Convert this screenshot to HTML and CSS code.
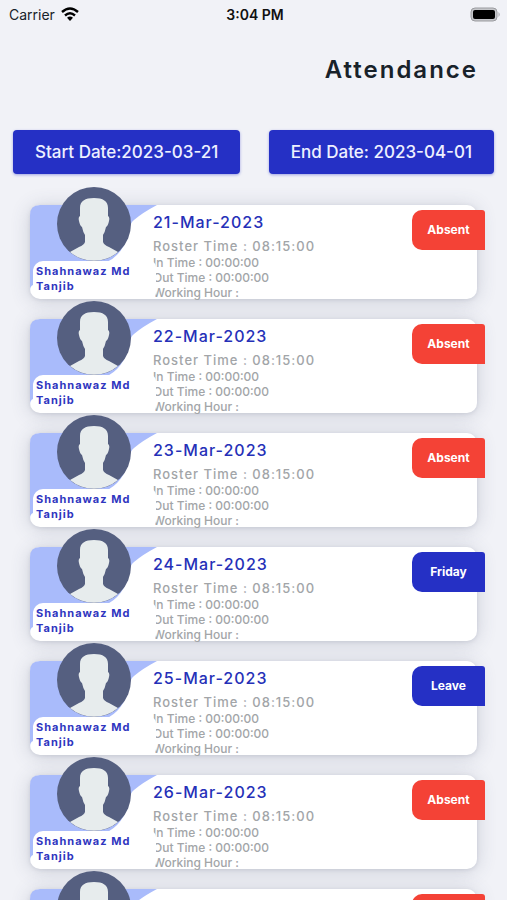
FILE: index.html
```html
<!DOCTYPE html>
<html lang="en">
<head>
<meta charset="utf-8">
<meta name="viewport" content="width=device-width, initial-scale=1">
<title>Attendance</title>
<link rel="stylesheet" href="styles.css">
<script src="attendance.js" defer></script>
</head>
<body>
<header class="status">
  <div class="carrier">Carrier
    <svg class="wifi" viewBox="0 0 18 14" aria-hidden="true"><g fill="none" stroke="#000" stroke-width="2.4"><path d="M1 5Q9-2 17 5"/><path d="M4 8.500Q9 4 14 8.500"/></g><path d="M6 10.800Q9 8.400 12 10.800L9 14Z"/></svg>
  </div>
  <div class="clock">3:04 PM</div>
  <div class="power">
    <svg class="battery" viewBox="0 0 31 15" aria-hidden="true"><rect x="1" y="1" width="26" height="13" rx="4" fill="#c5c6ca" stroke="#9b9ca0"/><rect x="3" y="3" width="22" height="9" rx="2"/><path d="M28.500 5Q31 7.500 28.500 10Z" fill="#a9aaae"/></svg>
  </div>
</header>
<main>
  <h1 class="title">Attendance</h1>
  <div class="filters">
    <button class="date-button" type="button">Start Date:2023-03-21</button>
    <button class="date-button" type="button">End Date: 2023-04-01</button>
  </div>
  <ul class="days" id="days"></ul>
</main>
<template id="day">
  <li class="card">
    <svg class="swoosh" viewBox="0 0 127 94" aria-hidden="true"><path d="M0 10Q0 0 10 0H127Q112 8 104 15Q100 18 99 26Q94 50 75 58H10Q4 60 3 66V80Q0 81 0 86Z" fill="#a9bbfb"/></svg>
    <svg class="avatar" viewBox="0 0 74 74" aria-hidden="true"><circle cx="37" cy="37" r="37" fill="#555f80"/><path d="M37 11C46 11 51 14 51 21V29Q53 30 52 34Q51 39 49 40Q48 45 46 48V55Q47 58 52 60L61 65A37 37 0 0 1 13 65L22 60Q27 58 28 55V48Q26 45 25 40Q23 39 22 34Q21 30 23 29V21C23 14 28 11 37 11Z" fill="#e7eced"/></svg>
    <p class="name">Shahnawaz Md Tanjib</p>
    <div class="details">
      <h2 class="date"></h2>
      <p class="roster">Roster Time : 08:15:00</p>
      <p class="time">In Time : 00:00:00</p>
      <p class="time">Out Time : 00:00:00</p>
      <p class="time">Working Hour :</p>
    </div>
    <span class="badge"></span>
  </li>
</template>
</body>
</html>
```
FILE: styles.css
```css
* { box-sizing: border-box; }
body {
  margin: 0;
  height: 100vh;
  overflow: hidden;
  background: #f1f2f7;
  color: #18222a;
  font-family: Inter, "Liberation Sans", sans-serif;
}
h1, h2, p, ul { margin: 0; padding: 0; }
.status {
  display: grid;
  grid-template-columns: 1fr auto 1fr;
  align-items: center;
  height: 28px;
  padding: 0 6px 0 9px;
  font-size: 14px;
}
.carrier { display: flex; align-items: center; gap: 6px; }
.wifi { width: 18px; height: 14px; }
.clock { font-weight: 600; color: #111; }
.power { display: flex; justify-content: flex-end; }
.battery { width: 31px; height: 15px; }
.title {
  padding: 25px 29px 0 0;
  text-align: right;
  font-size: 24px;
  line-height: 34px;
  font-weight: 600;
  letter-spacing: 2px;
}
.filters {
  display: flex;
  justify-content: space-between;
  padding: 43px 13px 0;
}
.date-button {
  height: 44px;
  padding: 0 22px;
  border: 0;
  border-radius: 4px;
  background: #2530c5;
  box-shadow: 0 1px 3px #2530c566;
  color: #eef0ff;
  font: 500 17px Inter, "Liberation Sans", sans-serif;
}
.days {
  display: flex;
  flex-direction: column;
  gap: 20px;
  padding: 31px 30px 0;
  list-style: none;
}
.card {
  position: relative;
  height: 94px;
  padding: 7px 10px 0 123px;
  border-radius: 10px;
  background: #fff;
  box-shadow: 0 2px 20px #3c466433, 0 1px 4px #3c466422;
}
.swoosh {
  position: absolute;
  left: 0;
  top: 0;
  width: 127px;
  height: 94px;
}
.avatar {
  position: absolute;
  left: 27px;
  top: -18px;
  width: 74px;
  height: 74px;
}
.name {
  position: absolute;
  z-index: 1;
  left: 3px;
  top: 56px;
  width: 123px;
  height: 38px;
  padding: 3px 0 0 3px;
  border-radius: 10px 6px 6px 10px;
  background: #fff;
  color: #2f36c0;
  font-size: 11px;
  line-height: 15px;
  font-weight: 700;
  letter-spacing: 1px;
}
.details {
  height: 100%;
  color: #a2a5a8;
}
.date {
  color: #2530b8;
  font-size: 16px;
  line-height: 20px;
  font-weight: 500;
  letter-spacing: 1px;
}
.roster {
  padding-top: 5px;
  font-size: 13px;
  line-height: 18px;
  font-weight: 500;
  letter-spacing: 1px;
}
.time {
  font-size: 12px;
  line-height: 15px;
  font-weight: 500;
}
.badge {
  position: absolute;
  right: -8px;
  top: 5px;
  width: 73px;
  border-radius: 10px 3px 0 10px;
  background: #f44236;
  color: #fff;
  text-align: center;
  font-size: 12px;
  line-height: 40px;
  font-weight: 700;
}
.badge-off { background: #2530c5; }
```
FILE: attendance.js
```js
const days = [
  ["21-Mar-2023", "Absent"],
  ["22-Mar-2023", "Absent"],
  ["23-Mar-2023", "Absent"],
  ["24-Mar-2023", "Friday"],
  ["25-Mar-2023", "Leave"],
  ["26-Mar-2023", "Absent"],
  ["27-Mar-2023", "Absent"]
];
const list = document.getElementById("days");
const template = document.getElementById("day");
for (const [date, state] of days) {
  const card = template.content.cloneNode(true);
  card.querySelector(".date").textContent = date;
  const badge = card.querySelector(".badge");
  badge.textContent = state;
  if (state !== "Absent") badge.classList.add("badge-off");
  list.append(card);
}
```
